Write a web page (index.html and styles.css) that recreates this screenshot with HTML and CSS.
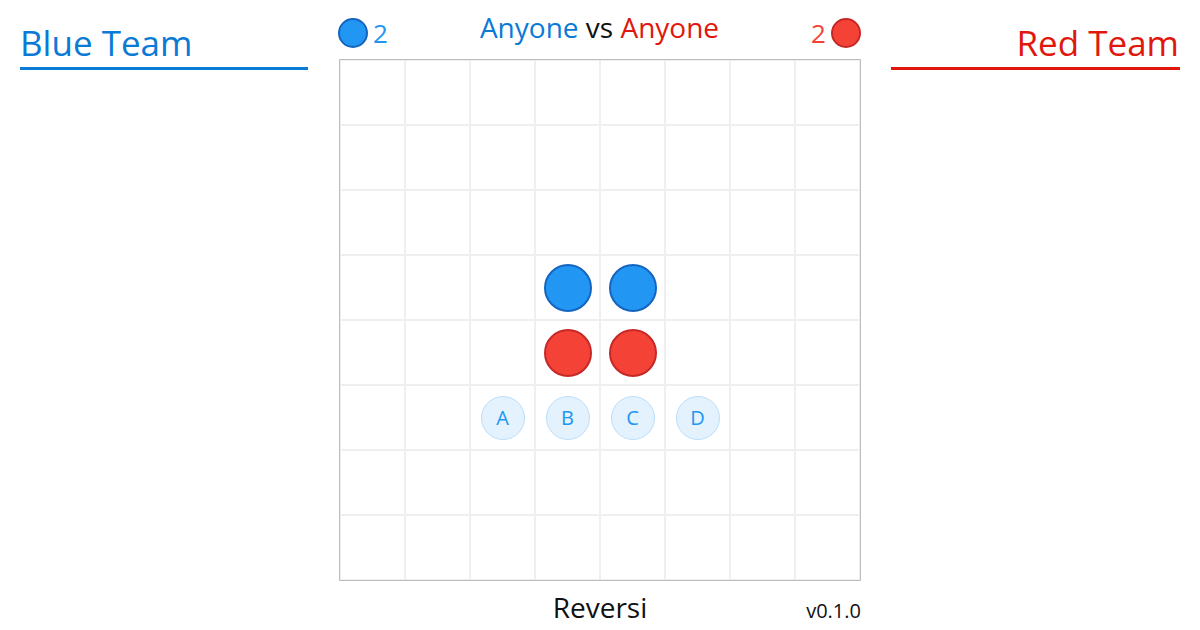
FILE: index.html
```html
<!DOCTYPE html>
<html lang="en">
<head>
    <meta charset="UTF-8">
    <meta name="viewport" content="width=device-width, initial-scale=1.0">
    <title>Reversi</title>
    <link rel="stylesheet" href="styles.css">
</head>
<body>
    <main class="app">
        <aside class="team blue">
            <h2>Blue Team</h2>
        </aside>

        <section class="game">
            <header class="status">
                <div class="score blue"><span class="disc"></span><span>2</span></div>
                <div class="title"><span class="blue-text">Anyone</span> vs <span class="red-text">Anyone</span></div>
                <div class="score red"><span>2</span><span class="disc"></span></div>
            </header>

            <div class="board">
                <div class="cell"></div><div class="cell"></div><div class="cell"></div><div class="cell"></div><div class="cell"></div><div class="cell"></div><div class="cell"></div><div class="cell"></div>
                <div class="cell"></div><div class="cell"></div><div class="cell"></div><div class="cell"></div><div class="cell"></div><div class="cell"></div><div class="cell"></div><div class="cell"></div>
                <div class="cell"></div><div class="cell"></div><div class="cell"></div><div class="cell"></div><div class="cell"></div><div class="cell"></div><div class="cell"></div><div class="cell"></div>
                <div class="cell"></div><div class="cell"></div><div class="cell"></div><div class="cell"><span class="piece blue"></span></div><div class="cell"><span class="piece blue"></span></div><div class="cell"></div><div class="cell"></div><div class="cell"></div>
                <div class="cell"></div><div class="cell"></div><div class="cell"></div><div class="cell"><span class="piece red"></span></div><div class="cell"><span class="piece red"></span></div><div class="cell"></div><div class="cell"></div><div class="cell"></div>
                <div class="cell"></div><div class="cell"></div><div class="cell"><span class="hint">A</span></div><div class="cell"><span class="hint">B</span></div><div class="cell"><span class="hint">C</span></div><div class="cell"><span class="hint">D</span></div><div class="cell"></div><div class="cell"></div>
                <div class="cell"></div><div class="cell"></div><div class="cell"></div><div class="cell"></div><div class="cell"></div><div class="cell"></div><div class="cell"></div><div class="cell"></div>
                <div class="cell"></div><div class="cell"></div><div class="cell"></div><div class="cell"></div><div class="cell"></div><div class="cell"></div><div class="cell"></div><div class="cell"></div>
            </div>

            <footer class="footer">
                <span></span>
                <span class="name">Reversi</span>
                <span class="version">v0.1.0</span>
            </footer>
        </section>

        <aside class="team red">
            <h2>Red Team</h2>
        </aside>
    </main>
</body>
</html>
```

FILE: styles.css
```css
body{
    margin: 0px;
    background: white;
    font-family: "Open Sans", "Noto Sans", sans-serif;
    color: #111;
}
.app{
    display: grid;
    grid-template-columns: 288px 522px 288px;
    column-gap: 31px;
    padding: 0px 21px 0px 20px;
}

/* teams */
.team h2{
    margin: 19px 0px 0px 0px;
    font-size: 35px;
    font-weight: 400;
    line-height: 48px;
}
.team.blue h2{
    color: #0b7ad6;
    border-bottom: 3px solid #0b7ad6;
}
.team.red h2{
    color: #e0170c;
    border-bottom: 3px solid #e0170c;
    text-align: right;
    margin-left: -1px;
    padding-right: 1px;
}

/* status */
.status{
    height: 59px;
    display: flex;
    justify-content: space-between;
    align-items: flex-start;
}
.title{
    margin-top: 8px;
    font-size: 28px;
    line-height: 38px;
}
.blue-text{ color: #0b7ad6; }
.red-text{ color: #e0170c; }
.score{
    margin-top: 15px;
    height: 35px;
    display: flex;
    align-items: center;
    gap: 5px;
    font-size: 26px;
}
.score.blue{ color: #2196f3; margin-left: -1px; }
.score.red{ color: #f44336; }
.disc{
    width: 30px;
    height: 30px;
    box-sizing: border-box;
    border-radius: 50%;
}
.score.blue .disc{
    background: #2196f3;
    border: 2px solid #1565c0;
}
.score.red .disc{
    background: #f44336;
    border: 2px solid #c62828;
}

/* board */
.board{
    display: grid;
    grid-template-columns: repeat(8, 65px);
    grid-template-rows: repeat(8, 65px);
    border: 1px solid #bdbdbd;
}
.cell{
    box-sizing: border-box;
    border: 1px solid #efefef;
    display: flex;
    align-items: center;
    justify-content: center;
}
.piece{
    width: 48px;
    height: 48px;
    box-sizing: border-box;
    border-radius: 50%;
}
.piece.blue{
    background: #2196f3;
    border: 2px solid #1565c0;
}
.piece.red{
    background: #f44336;
    border: 2px solid #c62828;
}
.hint{
    width: 44px;
    height: 44px;
    box-sizing: border-box;
    border-radius: 50%;
    background: #e3f2fd;
    border: 1px solid #bbdefb;
    color: #2196f3;
    font-size: 20px;
    display: flex;
    align-items: center;
    justify-content: center;
}

/* footer */
.footer{
    margin-top: 7px;
    display: grid;
    grid-template-columns: 1fr auto 1fr;
    align-items: baseline;
}
.footer .name{
    font-size: 28px;
    line-height: 38px;
}
.footer .version{
    justify-self: end;
    font-size: 20px;
}
```
